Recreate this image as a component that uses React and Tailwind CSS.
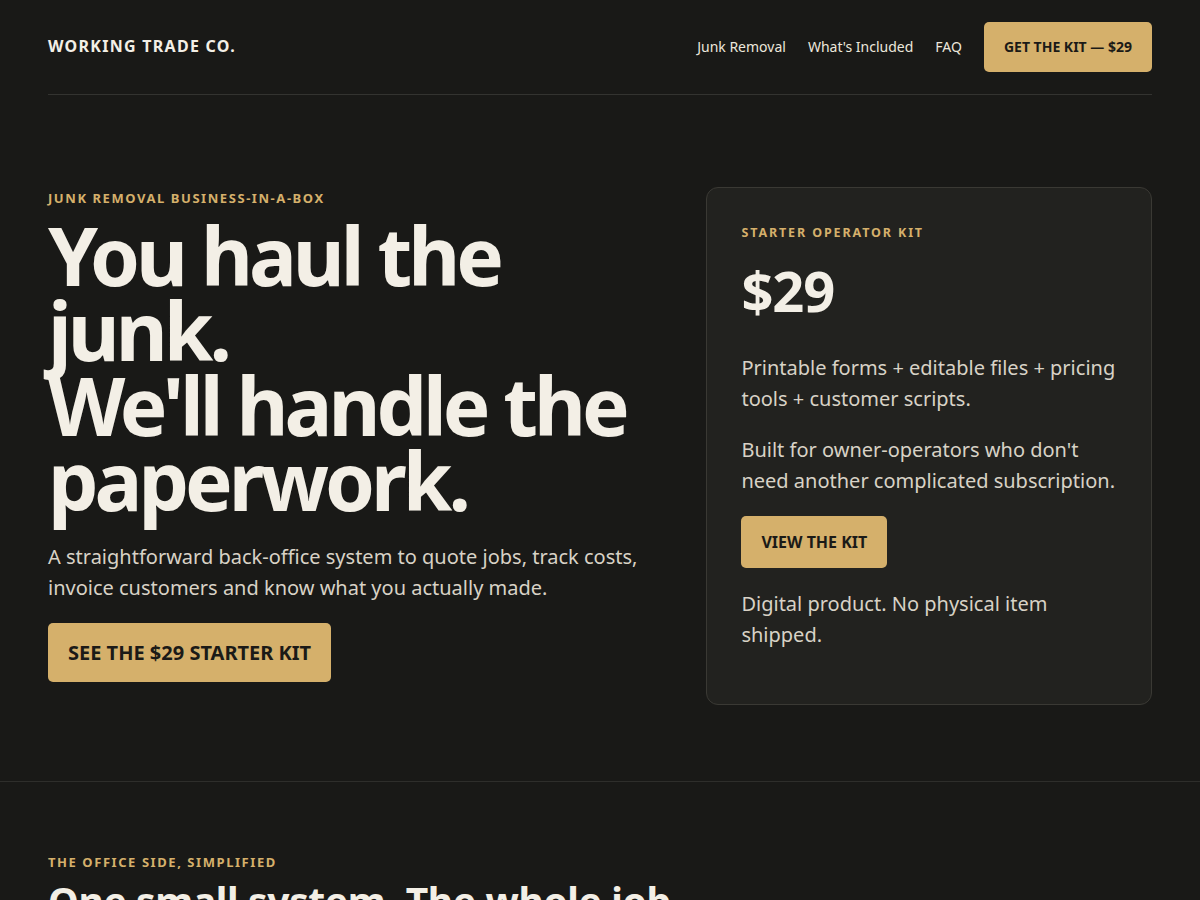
import React from 'react';

const navLinks = ['Junk Removal', "What's Included", 'FAQ'];

const Header = () => (
    <header className="mx-auto flex h-[95px] max-w-[1104px] items-center justify-between border-b border-[#333330]">
        <div className="pb-[2px] text-[16px] font-bold tracking-[0.08em] text-[#f3efe6]">WORKING TRADE CO.</div>
        <nav className="flex items-center gap-[22px] text-[14px] text-[#ece7dc]">
            {navLinks.map(link => (
                <a key={link} href="#" className="pb-[2px] hover:text-white">
                    {link}
                </a>
            ))}
            <a
                href="#"
                className="rounded-[5px] bg-[#d5b06b] px-[20px] py-[14px] text-[14px] font-bold leading-[22px] text-[#1b1a17]"
            >
                GET THE KIT — $29
            </a>
        </nav>
    </header>
);

const KitCard = () => (
    <div className="rounded-[12px] border border-[#3a3934] bg-[#22221f] pl-[34px] pr-[30px] pt-[36px] pb-[54px]">
        <div className="text-[12.5px] font-bold tracking-[0.15em] text-[#d5b06b]">STARTER OPERATOR KIT</div>
        <div className="mt-[14px] text-[56px] font-bold leading-[66px] tracking-[-0.02em] text-[#f3efe6]">$29</div>
        <p className="mt-[29px] text-[20px] leading-[31px] text-[#d8d2c6]">
            Printable forms + editable files + pricing tools + customer scripts.
        </p>
        <p className="mt-[20px] text-[20px] leading-[31px] text-[#d8d2c6]">
            Built for owner-operators who don't need another complicated subscription.
        </p>
        <a
            href="#"
            className="mt-[20px] inline-block rounded-[5px] bg-[#d5b06b] px-[20px] py-[14px] text-[16px] font-bold leading-[24px] text-[#1b1a17]"
        >
            VIEW THE KIT
        </a>
        <p className="mt-[20px] text-[20px] leading-[31px] text-[#d8d2c6]">
            Digital product. No physical item shipped.
        </p>
    </div>
);

export default function App() {
    return (
        <div className="min-h-[900px] bg-[#191917] font-['Noto_Sans',sans-serif] antialiased">
            <Header />

            {/* Hero */}
            <section className="border-b border-[#2e2e2b]">
                <div className="mx-auto grid max-w-[1104px] grid-cols-[1.37fr_1fr] items-start gap-[48px] pt-[92px] pb-[76px]">
                    <div className="pt-[2px]">
                        <div className="text-[13px] font-bold tracking-[0.12em] text-[#d5b06b]">JUNK REMOVAL BUSINESS-IN-A-BOX</div>
                        <h1 className="mt-[8px] text-[80px] font-bold leading-[75px] tracking-[-0.05em] text-[#f3efe6]">
                            You haul the junk.
                            <br />
                            We'll handle the paperwork.
                        </h1>
                        <p className="mt-[24px] text-[20px] leading-[31px] text-[#d8d2c6]">
                            A straightforward back-office system to quote jobs, track costs, invoice customers and know what you actually made.
                        </p>
                        <a
                            href="#"
                            className="mt-[20px] inline-block rounded-[5px] bg-[#d5b06b] px-[20px] py-[15px] text-[20px] font-bold leading-[29px] text-[#1b1a17]"
                        >
                            SEE THE $29 STARTER KIT
                        </a>
                    </div>
                    <KitCard />
                </div>
            </section>

            {/* Office side */}
            <section className="mx-auto max-w-[1104px] pt-[71px]">
                <div className="text-[13px] font-bold tracking-[0.12em] text-[#d5b06b]">THE OFFICE SIDE, SIMPLIFIED</div>
                <h2 className="mt-[6px] text-[39px] font-bold leading-[46px] tracking-[-0.01em] text-[#f3efe6]">
                    One small system. The whole job.
                </h2>
            </section>
        </div>
    );
}
